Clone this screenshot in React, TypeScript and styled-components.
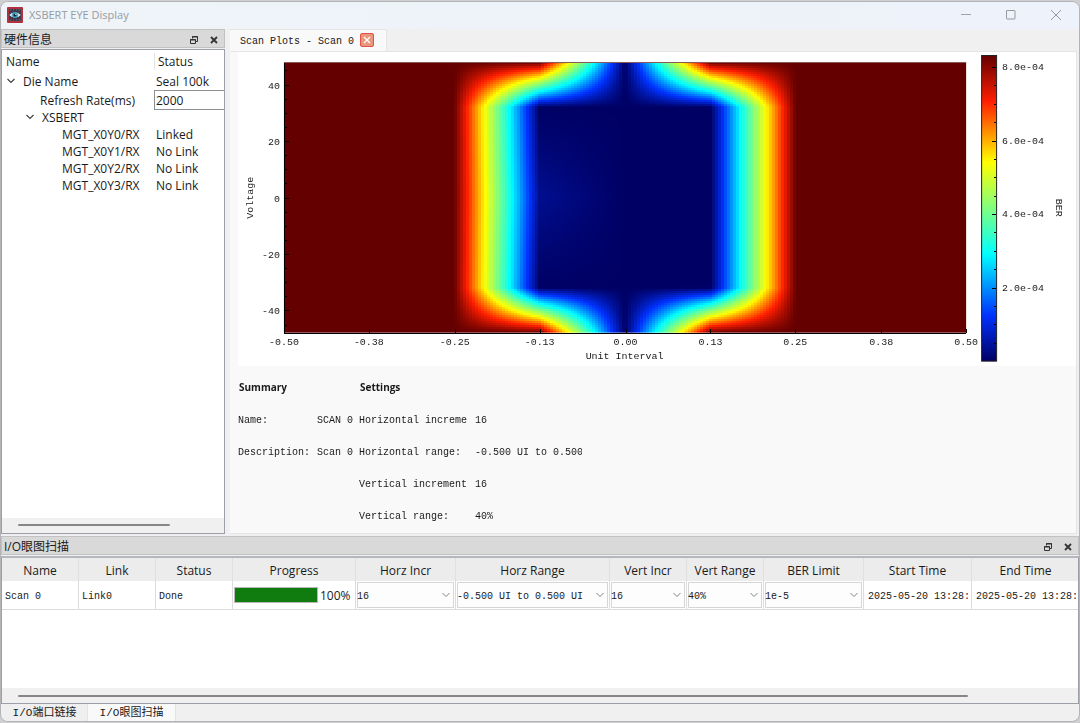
import React, { useLayoutEffect, useRef } from "react";
import styled, { createGlobalStyle } from "styled-components";

const mono = `"Liberation Mono", "Noto Sans CJK SC", monospace`;
const sans = `"Open Sans", "Noto Sans CJK SC", sans-serif`;

const GlobalStyle = createGlobalStyle`
  * { box-sizing: border-box; }
  body { margin: 0; background: #cfcfd2; font-family: ${sans}; font-size: 12px; color: #1a1a1a; }
  button, input, select { font: inherit; color: inherit; margin: 0; }
`;

const Desktop = styled.div`
  min-height: 100vh;
  padding: 1px 0;
  display: flex;
`;

const Window = styled.div`
  flex: 1;
  min-width: 0;
  display: flex;
  flex-direction: column;
  background: #f0f0f0;
  border: 1px solid #b4b4b8;
  border-radius: 8px;
  overflow: hidden;
`;

const TitleBar = styled.header`
  height: 27px;
  flex: none;
  display: flex;
  align-items: center;
  gap: 6px;
  padding: 0 1px 2px 6px;
  background: linear-gradient(90deg, #eff4f9, #edf3f8 50%, #eef2fb);
`;

const Title = styled.h1`
  flex: 1;
  margin: 0;
  font-size: 11px;
  font-weight: 400;
  line-height: 16px;
  color: #969ba0;
`;

const CaptionButtons = styled.div`
  display: flex;
`;

const CaptionButton = styled.button`
  width: 45px;
  height: 25px;
  padding: 0;
  border: 0;
  background: none;
  display: grid;
  place-items: center;
`;

const Main = styled.main`
  display: grid;
  grid-template-columns: 224px minmax(0, 1fr);
  column-gap: 5px;
  height: 503px;
  flex: none;
  padding-right: 2px;
`;

const Dock = styled.section`
  display: flex;
  flex-direction: column;
  min-width: 0;
  min-height: 0;
`;

const DockTitle = styled.div`
  flex: none;
  height: 19px;
  display: flex;
  align-items: center;
  padding: 2px 0 0 2px;
  background: #d9d9d9;
  border: 1px solid #c2c2c2;
`;

const DockName = styled.h2`
  flex: 1;
  margin: 0;
  font-size: 12px;
  font-weight: 400;
  line-height: 17px;
`;

const DockButton = styled.button`
  width: 20px;
  height: 16px;
  padding: 0;
  border: 0;
  background: none;
  display: grid;
  place-items: center;
`;

const Tree = styled.div`
  flex: 1;
  display: flex;
  flex-direction: column;
  margin-top: 1px;
  background: #fff;
  border: 1px solid #9ba0a8;
`;

const TreeRow = styled.div<{ $tall?: number }>`
  display: grid;
  grid-template-columns: 152px 1fr;
  align-items: center;
  height: ${(p) => p.$tall ?? 17}px;
`;

const TreeHead = styled(TreeRow)`
  & > :first-child { padding-left: 4px; }
  & > :last-child { border-left: 1px solid #e3e3e3; padding-left: 3px; }
`;

const TreeName = styled.label<{ $indent: number }>`
  display: flex;
  align-items: center;
  gap: 8px;
  padding-left: ${(p) => p.$indent}px;
  line-height: 17px;
  white-space: nowrap;
`;

const TreeStatus = styled.span`
  padding-left: 2px;
  line-height: 17px;
`;

const RateInput = styled.input`
  width: 100%;
  height: 20px;
  padding: 0 1px;
  background: #fff;
  border: 1px solid #8c8f94;
  border-right: 0;
  border-radius: 0;
  outline: 0;
`;

const Fill = styled.div`
  flex: 1;
`;

const ScrollTrack = styled.div`
  flex: none;
  height: 15px;
  display: flex;
  align-items: center;
  padding-left: 16px;
  background: #f0f0f0;
`;

const ScrollThumb = styled.div<{ $width: string }>`
  width: ${(p) => p.$width};
  height: 2px;
  border-radius: 1px;
  background: #868686;
`;

const Plots = styled.section`
  display: flex;
  flex-direction: column;
  min-width: 0;
`;

const PlotTabs = styled.div`
  flex: none;
  display: flex;
  height: 22px;
`;

const PlotTab = styled.div`
  display: flex;
  align-items: center;
  gap: 4px;
  padding: 0 12px 1px 10px;
  background: #f9f9f9;
  border: 1px solid #e5e5e5;
  border-width: 1px 1px 0 0;
  font-family: ${mono};
  font-size: 10px;
  width: 157px;
  white-space: nowrap;
`;

const TabLabel = styled.span`
  flex: 1;
  padding-top: 2px;
`;

const CloseTab = styled.button`
  width: 14px;
  height: 14px;
  padding: 0;
  display: grid;
  place-items: center;
  background: #e9967a;
  border: 1px solid #e0524a;
  border-radius: 2px;
`;

const PlotPage = styled.div`
  flex: 1;
  display: flex;
  flex-direction: column;
  padding-left: 7px;
  background: #f9f9f9;
  border: 1px solid #e5e5e5;
  border-left-color: #f9f9f9;
`;

const ChartBox = styled.div`
  background: #fff;
`;

const ChartSvg = styled.svg`
  display: block;
  width: 100%;
  height: auto;
  font-family: ${mono};
  font-size: 10px;
  fill: #1a1a1a;
`;

const HeatCanvas = styled.canvas`
  display: block;
  width: 100%;
  height: 100%;
  image-rendering: pixelated;
`;

const Details = styled.div`
  display: grid;
  grid-template-columns: 79px 42px 116px 107px;
  grid-auto-rows: 32px;
  align-items: center;
  padding-top: 7px;
  font-family: ${mono};
  font-size: 10px;
  white-space: nowrap;
`;

const DetailHead = styled.h3`
  grid-column: span 2;
  margin: 0;
  padding: 0 0 4px 1px;
  font-family: "Open Sans", sans-serif;
  font-size: 10px;
  font-weight: 700;
`;

const Cell = styled.span<{ $clip?: boolean }>`
  overflow: hidden;
  margin-right: ${(p) => (p.$clip ? 6 : 0)}px;
`;

const ScanDock = styled(Dock)`
  flex: 1;
  margin-top: 4px;
`;

const ScanArea = styled.div`
  flex: 1;
  min-height: 147px;
  display: flex;
  flex-direction: column;
  margin-top: 1px;
  background: #fff;
  border: 1px solid #9ba0a8;
  border-top: 2px solid #b4b7bd;
`;

const TableClip = styled.div`
  flex: 1;
  overflow: hidden;
`;

const ScanTable = styled.table`
  width: 1078px;
  min-width: 100%;
  table-layout: fixed;
  border-collapse: separate;
  border-spacing: 0;
`;

const Th = styled.th`
  height: 23px;
  padding: 2px 0 0;
  background: #ececec;
  border-right: 1px solid #e0e0e0;
  font-weight: 400;
  line-height: 17px;
`;

const Td = styled.td<{ $pad: number }>`
  height: 29px;
  padding: ${(p) => (p.$pad > 1 ? 2 : 0)}px 0 0 ${(p) => p.$pad}px;
  border-right: 1px solid #dcdcdc;
  border-bottom: 1px solid #dcdcdc;
  font-family: ${mono};
  font-size: 10px;
  white-space: nowrap;
  overflow: hidden;
`;

const Progress = styled.div`
  display: flex;
  align-items: center;
  gap: 2px;
  font-family: ${sans};
  font-size: 12px;
`;

const ProgressTrack = styled.div`
  width: 84px;
  height: 16px;
  border: 1px solid #b9b9b9;
`;

const ProgressBar = styled.div`
  height: 100%;
  background: #107c10;
`;

const Combo = styled.span`
  position: relative;
  display: block;
  margin-right: 1px;
`;

const ComboSelect = styled.select`
  appearance: none;
  display: block;
  width: 100%;
  height: 26px;
  padding: 2px 0 0;
  background: #fdfdfd;
  border: 1px solid #d6d6d6;
  border-left-width: 0;
  box-shadow: inset 1px 0 #d6d6d6;
  border-radius: 1px;
  outline: 0;
`;

const ComboArrow = styled.svg`
  position: absolute;
  right: 4px;
  top: 10px;
  pointer-events: none;
`;

const BottomTabs = styled.nav`
  flex: none;
  display: flex;
  height: 17px;
  padding-left: 1px;
`;

const BottomTab = styled.button<{ $active?: boolean }>`
  width: ${(p) => (p.$active ? 88 : 86)}px;
  padding: 2px 0 0;
  border: 0;
  border-right: 1px solid #e3e3e3;
  background: ${(p) => (p.$active ? "#f9f9f9" : "#efefef")};
  font-family: ${mono};
  font-size: 11px;
  line-height: 15px;
  white-space: nowrap;
`;

type Stop = [number, number, number, number];

const jet: Stop[] = [
  [0, 0, 0, 100],
  [0.15, 0, 50, 255],
  [0.35, 0, 255, 255],
  [0.65, 255, 255, 0],
  [0.85, 255, 30, 0],
  [1, 100, 0, 0],
];

function jetColor(v: number): [number, number, number] {
  for (let i = 1; i < jet.length; i++) {
    const a = jet[i - 1];
    const b = jet[i];
    if (v <= b[0]) {
      const t = (v - a[0]) / (b[0] - a[0]);
      return [a[1] + (b[1] - a[1]) * t, a[2] + (b[2] - a[2]) * t, a[3] + (b[3] - a[3]) * t];
    }
  }
  return [100, 0, 0];
}

// Error ratio, relative to the scale's maximum: one row per 16 voltage codes, one column per 0.125 UI.
const samples = [
  [1, 1, 1, 1, 0, 1, 1, 1, 1],
  [1, 1, 1, 0, 0, 0, 1, 1, 1],
  [1, 1, 1, 0.02, 0, 0, 1, 1, 1],
  [1, 1, 1, 0.042, 0, 0, 1, 1, 1],
  [1, 1, 1, 0.02, 0, 0, 1, 1, 1],
  [1, 1, 1, 0, 0, 0, 1, 1, 1],
  [1, 1, 1, 1, 0, 1, 1, 1, 1],
];

function sampleAt(u: number, v: number) {
  const x = u * 8;
  const y = v * 6;
  const i = Math.min(7, Math.floor(x));
  const j = Math.min(5, Math.floor(y));
  const fx = x - i;
  const fy = y - j;
  const top = samples[j][i] * (1 - fx) + samples[j][i + 1] * fx;
  const bottom = samples[j + 1][i] * (1 - fx) + samples[j + 1][i + 1] * fx;
  return top * (1 - fy) + bottom * fy;
}

function HeatMap() {
  const ref = useRef<HTMLCanvasElement>(null);
  const cols = 228;
  const rows = 136;
  useLayoutEffect(() => {
    const ctx = ref.current?.getContext("2d");
    if (!ctx) return;
    const image = ctx.createImageData(cols, rows);
    for (let r = 0; r < rows; r++) {
      for (let c = 0; c < cols; c++) {
        const rgb = jetColor(sampleAt((c + 0.5) / cols, (r + 0.5) / rows));
        image.data.set([...rgb.map(Math.round), 255], (r * cols + c) * 4);
      }
    }
    ctx.putImageData(image, 0, 0);
  }, []);
  return <HeatCanvas ref={ref} width={cols} height={rows} />;
}

const plot = { x: 46, y: 10, w: 683, h: 271 };
const bar = { x: 744, y: 3, w: 15, h: 306 };
const xLabels = ["-0.50", "-0.38", "-0.25", "-0.13", "0.00", "0.13", "0.25", "0.38", "0.50"];
const yAt = (v: number) => Math.round(plot.y + plot.h / 2 - (v * plot.h) / 96);
const barAt = (v: number) => Math.round(bar.y + bar.h - (v * bar.h) / 8.33);

function Chart() {
  const yTicks = Array.from({ length: 19 }, (_, i) => i * 5 - 45);
  const barTicks = Array.from({ length: 16 }, (_, i) => (i + 1) / 2);
  return (
    <ChartSvg viewBox="0 0 839 314" role="img" aria-label="Eye scan of BER over unit interval and voltage">
      <defs>
        <linearGradient id="jet" x1="0" y1="1" x2="0" y2="0">
          {jet.map(([o, r, g, b]) => (
            <stop key={o} offset={o} stopColor={`rgb(${r},${g},${b})`} />
          ))}
        </linearGradient>
      </defs>
      <foreignObject x={plot.x} y={plot.y} width={plot.w} height={plot.h}>
        <HeatMap />
      </foreignObject>
      <g stroke="#000" shapeRendering="crispEdges" fill="none">
        <path d={`M${plot.x + 0.5} ${plot.y}V${plot.y + plot.h + 0.5}H${plot.x + plot.w}`} />
        <path stroke="#8a5a5a" d={`M${plot.x} ${plot.y + 0.5}H${plot.x + plot.w}`} />
        {yTicks.map((v) => (
          <path key={v} d={`M${plot.x} ${yAt(v) + 0.5}h${v % 20 === 0 ? 5 : 3}`} />
        ))}
        {xLabels.map((l, i) => (
          <path key={l} d={`M${plot.x + Math.round((i * plot.w) / 8) + 0.5} ${plot.y + plot.h}v-4`} />
        ))}
      </g>
      <rect x={bar.x + 0.5} y={bar.y + 0.5} width={bar.w} height={bar.h} fill="url(#jet)" stroke="#222" />
      <g stroke="#000" shapeRendering="crispEdges">
        {barTicks.map((v) => (
          <path key={v} d={`M${bar.x + bar.w} ${barAt(v) + 0.5}h${v % 2 === 0 ? -4 : -2}`} />
        ))}
      </g>
      {[40, 20, 0, -20, -40].map((v) => (
        <text key={v} x={42} y={yAt(v) + 4} textAnchor="end">{v}</text>
      ))}
      {xLabels.map((l, i) => (
        <text key={l} x={plot.x + Math.round((i * plot.w) / 8)} y={293} textAnchor="middle">{l}</text>
      ))}
      <text x={387} y={307} textAnchor="middle">Unit Interval</text>
      <text transform="translate(15 146) rotate(-90)" textAnchor="middle">Voltage</text>
      {[8, 6, 4, 2].map((v) => (
        <text key={v} x={765} y={barAt(v) + 3}>{`${v}.0e-04`}</text>
      ))}
      <text transform="translate(819 156) rotate(90)" textAnchor="middle">BER</text>
    </ChartSvg>
  );
}

const Chevron = () => (
  <svg width="8" height="6" viewBox="0 0 8 6" fill="none" stroke="#444" strokeWidth="1.2">
    <path d="M0.5 1L4 4.5L7.5 1" />
  </svg>
);

function AppIcon() {
  return (
    <svg width="16" height="16" viewBox="0 0 16 16">
      <rect width="16" height="16" rx="1" fill="#b3303c" />
      <rect x="2" y="2" width="12" height="12" fill="#4b3346" />
      <path d="M2.5 3h2M6 3h1M9 3h1M11.5 3h2M2.5 13h2M6 13h1M9 13h1M11.5 13h2" stroke="#3d7f92" strokeWidth="1" />
      <path d="M1.5 8Q8 1.5 14.5 8Q8 14.5 1.5 8Z" fill="#c4dde2" stroke="#27334b" strokeWidth="0.8" />
      <circle cx="8" cy="8" r="2.9" fill="#3a9db5" />
      <circle cx="8" cy="8" r="1.5" fill="#17243a" />
      <circle cx="8.8" cy="7.2" r="0.7" fill="#fff" />
    </svg>
  );
}

function DockHeader({ name }: { name: string }) {
  return (
    <DockTitle>
      <DockName>{name}</DockName>
      <DockButton aria-label={`Float ${name}`}>
        <svg width="8" height="8" viewBox="0 0 8 8" fill="none" stroke="#333">
          <path d="M2.5 2.5V0.5H7.5V5.5H5.5M2 1H8" />
          <path d="M0.5 3.5H5.5V7.5H0.5ZM0 4H6" />
        </svg>
      </DockButton>
      <DockButton aria-label={`Close ${name}`}>
        <svg width="8" height="8" viewBox="0 0 8 8" stroke="#333" strokeWidth="1.8">
          <path d="M1 1L7 7M7 1L1 7" />
        </svg>
      </DockButton>
    </DockTitle>
  );
}

const lanes = [
  ["MGT_X0Y0/RX", "Linked"],
  ["MGT_X0Y1/RX", "No Link"],
  ["MGT_X0Y2/RX", "No Link"],
  ["MGT_X0Y3/RX", "No Link"],
];

const columns: [string, number][] = [
  ["Name", 77],
  ["Link", 77],
  ["Status", 77],
  ["Progress", 123],
  ["Horz Incr", 100],
  ["Horz Range", 154],
  ["Vert Incr", 77],
  ["Vert Range", 77],
  ["BER Limit", 100],
  ["Start Time", 108],
  ["End Time", 108],
];

const choices: [string, string][] = [
  ["Horz Incr", "16"],
  ["Horz Range", "-0.500 UI to 0.500 UI"],
  ["Vert Incr", "16"],
  ["Vert Range", "40%"],
  ["BER Limit", "1e-5"],
];

export default function App() {
  const progress = 100;
  return (
    <Desktop>
      <GlobalStyle />
      <Window>
        <TitleBar>
          <AppIcon />
          <Title>XSBERT EYE Display</Title>
          <CaptionButtons>
            <CaptionButton aria-label="Minimize">
              <svg width="10" height="10" viewBox="0 0 10 10" stroke="#a0a4a8"><path d="M0 4.5H10" /></svg>
            </CaptionButton>
            <CaptionButton aria-label="Maximize">
              <svg width="10" height="10" viewBox="0 0 10 10" fill="none" stroke="#96999d"><rect x="0.5" y="0.5" width="8.5" height="8.5" rx="0.5" /></svg>
            </CaptionButton>
            <CaptionButton aria-label="Close">
              <svg width="10" height="10" viewBox="0 0 10 10" stroke="#96999d"><path d="M0 0L10 10M10 0L0 10" /></svg>
            </CaptionButton>
          </CaptionButtons>
        </TitleBar>

        <Main>
          <Dock>
            <DockHeader name="硬件信息" />
            <Tree>
              <TreeHead $tall={22}>
                <span>Name</span>
                <span>Status</span>
              </TreeHead>
              <TreeRow $tall={18}>
                <TreeName as="span" $indent={5}><Chevron />Die Name</TreeName>
                <TreeStatus>Seal 100k</TreeStatus>
              </TreeRow>
              <TreeRow $tall={18}>
                <TreeName htmlFor="rate" $indent={38}>Refresh Rate(ms)</TreeName>
                <RateInput id="rate" defaultValue="2000" />
              </TreeRow>
              <TreeRow $tall={18}>
                <TreeName as="span" $indent={24}><Chevron />XSBERT</TreeName>
              </TreeRow>
              {lanes.map(([name, status]) => (
                <TreeRow key={name}>
                  <TreeName as="span" $indent={60}>{name}</TreeName>
                  <TreeStatus>{status}</TreeStatus>
                </TreeRow>
              ))}
              <Fill />
              <ScrollTrack><ScrollThumb $width="152px" /></ScrollTrack>
            </Tree>
          </Dock>

          <Plots>
            <PlotTabs>
              <PlotTab>
                <TabLabel>Scan Plots - Scan 0</TabLabel>
                <CloseTab aria-label="Close tab">
                  <svg width="8" height="8" viewBox="0 0 8 8" stroke="#fff" strokeWidth="1.4"><path d="M1 1L7 7M7 1L1 7" /></svg>
                </CloseTab>
              </PlotTab>
            </PlotTabs>
            <PlotPage>
              <ChartBox><Chart /></ChartBox>
              <Details>
                <DetailHead>Summary</DetailHead>
                <DetailHead>Settings</DetailHead>
                <Cell>Name:</Cell>
                <Cell>SCAN 0</Cell>
                <Cell $clip>Horizontal increme</Cell>
                <Cell>16</Cell>
                <Cell>Description:</Cell>
                <Cell>Scan 0</Cell>
                <Cell $clip>Horizontal range:</Cell>
                <Cell>-0.500 UI to 0.500 UI</Cell>
                <Cell />
                <Cell />
                <Cell $clip>Vertical increment</Cell>
                <Cell>16</Cell>
                <Cell />
                <Cell />
                <Cell $clip>Vertical range:</Cell>
                <Cell>40%</Cell>
              </Details>
            </PlotPage>
          </Plots>
        </Main>

        <ScanDock>
          <DockHeader name="I/O眼图扫描" />
          <ScanArea>
            <TableClip>
              <ScanTable>
                <colgroup>
                  {columns.map(([name, width]) => <col key={name} width={width} />)}
                </colgroup>
                <thead>
                  <tr>{columns.map(([name]) => <Th key={name} scope="col">{name}</Th>)}</tr>
                </thead>
                <tbody>
                  <tr>
                    <Td $pad={3}>Scan 0</Td>
                    <Td $pad={3}>Link0</Td>
                    <Td $pad={3}>Done</Td>
                    <Td $pad={1}>
                      <Progress>
                        <ProgressTrack role="progressbar" aria-label="Scan 0 progress" aria-valuenow={progress}>
                          <ProgressBar style={{ width: `${progress}%` }} />
                        </ProgressTrack>
                        {progress}%
                      </Progress>
                    </Td>
                    {choices.map(([name, value]) => (
                      <Td key={name} $pad={1}>
                        <Combo>
                          <ComboSelect aria-label={name} defaultValue={value}>
                            <option>{value}</option>
                          </ComboSelect>
                          <ComboArrow width="8" height="6" viewBox="0 0 8 6" fill="none" stroke="#808080">
                            <path d="M0.5 1L4 4.5L7.5 1" />
                          </ComboArrow>
                        </Combo>
                      </Td>
                    ))}
                    <Td $pad={4}>2025-05-20 13:28:</Td>
                    <Td $pad={4}>2025-05-20 13:28:</Td>
                  </tr>
                </tbody>
              </ScanTable>
            </TableClip>
            <ScrollTrack><ScrollThumb $width="950px" /></ScrollTrack>
          </ScanArea>
        </ScanDock>
        <BottomTabs>
          <BottomTab>I/O端口链接</BottomTab>
          <BottomTab $active>I/O眼图扫描</BottomTab>
        </BottomTabs>
      </Window>
    </Desktop>
  );
}
